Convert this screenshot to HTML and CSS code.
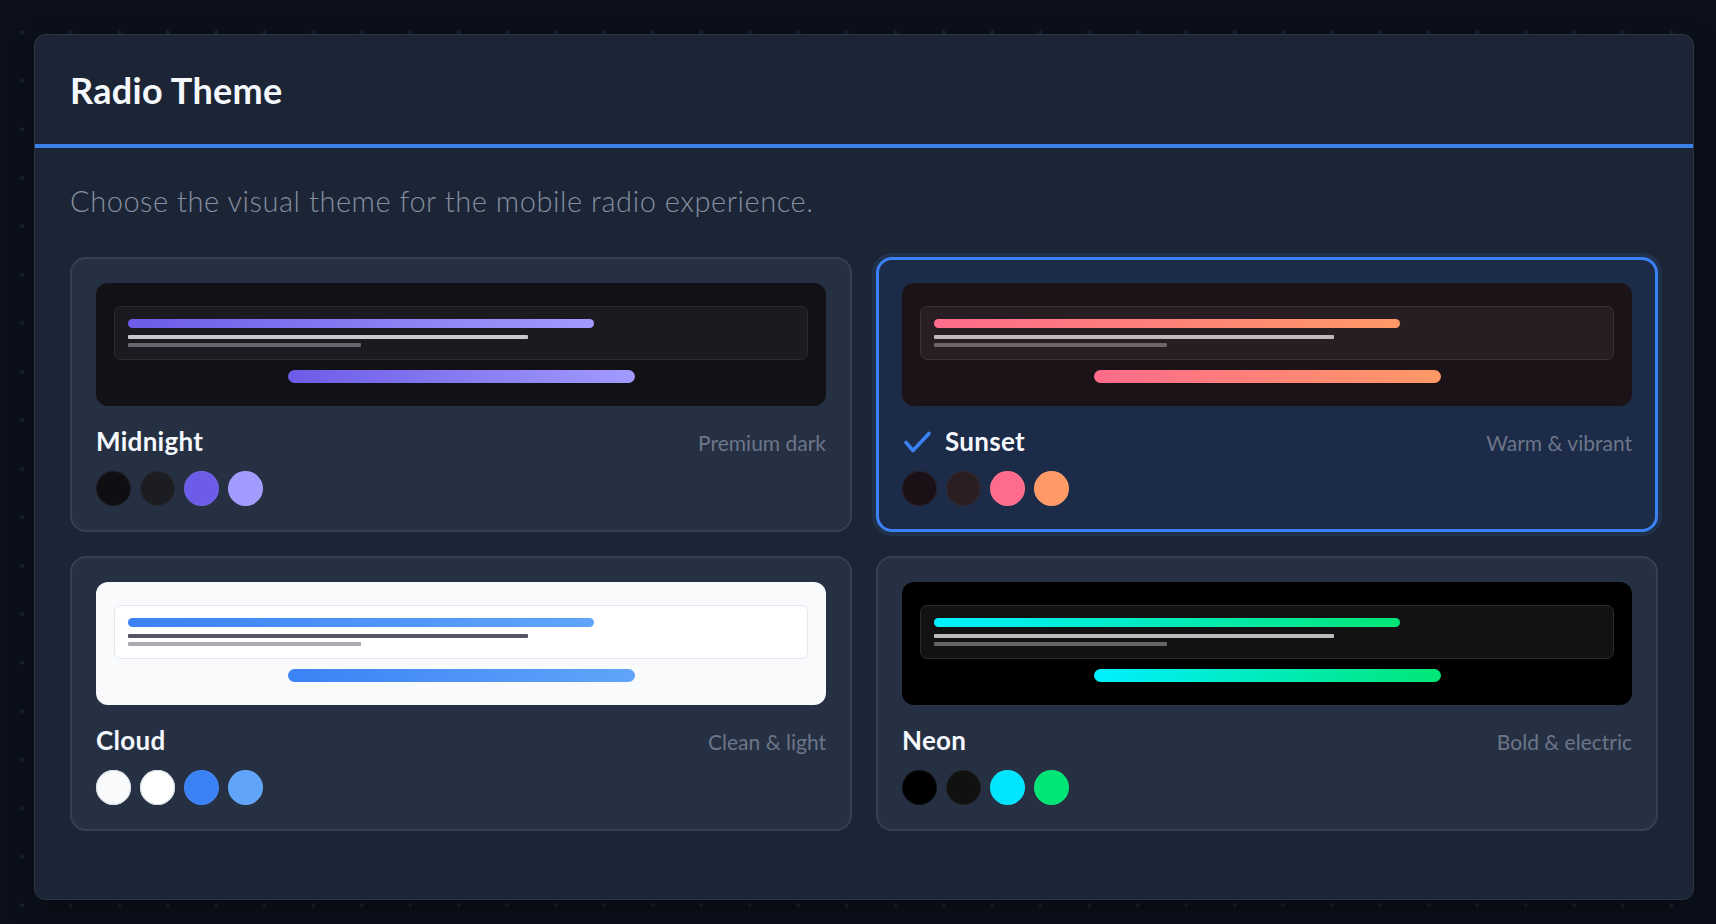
FILE: index.html
```html
<!DOCTYPE html>
<html lang="en">
<head>
<meta charset="utf-8">
<title>Radio Theme</title>
<link rel="stylesheet" href="styles.css">
</head>
<body>
<div class="page">
  <section class="panel">
    <header class="panel-header">
      <h1 class="panel-title">Radio Theme</h1>
    </header>
    <div class="panel-body">
      <p class="intro">Choose the visual theme for the mobile radio experience.</p>
      <div class="theme-grid">

        <div class="theme-card">
          <div class="preview preview-midnight">
            <div class="preview-box">
              <div class="bar"></div>
              <div class="line line-a"></div>
              <div class="line line-b"></div>
            </div>
            <div class="pill"></div>
          </div>
          <div class="theme-meta">
            <div class="theme-name">Midnight</div>
            <div class="theme-desc">Premium dark</div>
          </div>
          <div class="swatches">
            <span class="swatch sw-midnight-1"></span>
            <span class="swatch sw-midnight-2"></span>
            <span class="swatch sw-midnight-3"></span>
            <span class="swatch sw-midnight-4"></span>
          </div>
        </div>

        <div class="theme-card is-selected">
          <div class="preview preview-sunset">
            <div class="preview-box">
              <div class="bar"></div>
              <div class="line line-a"></div>
              <div class="line line-b"></div>
            </div>
            <div class="pill"></div>
          </div>
          <div class="theme-meta">
            <div class="theme-name"><svg class="check" width="30" height="24" viewBox="0 0 30 24"><polyline points="4,12.5 11,20.5 27,3.5" fill="none" stroke="#3b82f6" stroke-width="3.6" stroke-linecap="round" stroke-linejoin="round"/></svg>Sunset</div>
            <div class="theme-desc">Warm &amp; vibrant</div>
          </div>
          <div class="swatches">
            <span class="swatch sw-sunset-1"></span>
            <span class="swatch sw-sunset-2"></span>
            <span class="swatch sw-sunset-3"></span>
            <span class="swatch sw-sunset-4"></span>
          </div>
        </div>

        <div class="theme-card">
          <div class="preview preview-cloud">
            <div class="preview-box">
              <div class="bar"></div>
              <div class="line line-a"></div>
              <div class="line line-b"></div>
            </div>
            <div class="pill"></div>
          </div>
          <div class="theme-meta">
            <div class="theme-name">Cloud</div>
            <div class="theme-desc">Clean &amp; light</div>
          </div>
          <div class="swatches">
            <span class="swatch sw-cloud-1"></span>
            <span class="swatch sw-cloud-2"></span>
            <span class="swatch sw-cloud-3"></span>
            <span class="swatch sw-cloud-4"></span>
          </div>
        </div>

        <div class="theme-card">
          <div class="preview preview-neon">
            <div class="preview-box">
              <div class="bar"></div>
              <div class="line line-a"></div>
              <div class="line line-b"></div>
            </div>
            <div class="pill"></div>
          </div>
          <div class="theme-meta">
            <div class="theme-name">Neon</div>
            <div class="theme-desc">Bold &amp; electric</div>
          </div>
          <div class="swatches">
            <span class="swatch sw-neon-1"></span>
            <span class="swatch sw-neon-2"></span>
            <span class="swatch sw-neon-3"></span>
            <span class="swatch sw-neon-4"></span>
          </div>
        </div>

      </div>
    </div>
  </section>
</div>
</body>
</html>
```

FILE: styles.css
```css
* { box-sizing: border-box; }

html, body {
  margin: 0;
  height: 100%;
}

body {
  font-family: "Lato", "Liberation Sans", sans-serif;
  background-color: #0b101b;
  background-image: radial-gradient(circle, #1b2331 0, #1b2331 1.6px, transparent 2.4px);
  background-size: 48.5px 48.5px;
  background-position: -2px 8px;
  color: #f1f5f9;
}

.page {
  padding: 34px 22px 24px 34px;
}

.panel {
  background: #1c2535;
  border: 1px solid #2b3546;
  border-radius: 11px;
  height: 866px;
  box-shadow: 0 10px 30px rgba(0, 0, 0, 0.35);
  overflow: hidden;
}

.panel-header {
  padding: 34px 35px 32px;
  border-bottom: 4px solid #3b7fe8;
}

.panel-title {
  margin: 0;
  font-size: 36px;
  line-height: 1.2;
  font-weight: 700;
  color: #f5f8fc;
  letter-spacing: 0.3px;
}

.panel-body {
  padding: 36px 35px 36px;
}

.intro {
  margin: 0 0 38px;
  font-size: 29px;
  line-height: 1.2;
  font-weight: 300;
  letter-spacing: 0.55px;
  color: #858fa0;
}

.theme-grid {
  display: grid;
  grid-template-columns: 1fr 1fr;
  gap: 24px;
}

.theme-card {
  background: #253043;
  border: 2px solid #334056;
  border-radius: 16px;
  padding: 24px 24px 24px;
}

.theme-card.is-selected {
  background: #1c2b47;
  border: 3px solid #3b82f6;
  padding: 23px 23px 23px;
  box-shadow: 0 0 0 4px rgba(59, 130, 246, 0.13);
}

.preview {
  height: 123px;
  border-radius: 12px;
  padding: 23px 18px 0;
}

.preview-box {
  height: 54px;
  border-radius: 7px;
  border: 1px solid;
  padding: 12px 13px 0;
}

.bar {
  width: 70%;
  height: 9px;
  border-radius: 5px;
}

.line {
  height: 4px;
  border-radius: 1px;
}

.line-a {
  width: 60%;
  margin-top: 7px;
}

.line-b {
  width: 35%;
  margin-top: 4px;
}

.pill {
  width: 50%;
  height: 13px;
  margin: 10px auto 0;
  border-radius: 7px;
}

/* Midnight */
.preview-midnight { background: #121116; }
.preview-midnight .preview-box { background: #1b1a21; border-color: #2c2b34; }
.preview-midnight .bar,
.preview-midnight .pill { background: linear-gradient(90deg, #6c5ce7, #a29bfe); }
.preview-midnight .line-a { background: #c9c8cf; }
.preview-midnight .line-b { background: #67666e; }

/* Sunset */
.preview-sunset { background: #1c1318; }
.preview-sunset .preview-box { background: #281d22; border-color: #3d3036; }
.preview-sunset .bar,
.preview-sunset .pill { background: linear-gradient(90deg, #ff6b8b, #ff9966); }
.preview-sunset .line-a { background: #c4babd; }
.preview-sunset .line-b { background: #6f6468; }

/* Cloud */
.preview-cloud { background: #f8fafc; }
.preview-cloud .preview-box { background: #ffffff; border-color: #e3e7ed; }
.preview-cloud .bar,
.preview-cloud .pill { background: linear-gradient(90deg, #3b82f6, #60a5fa); }
.preview-cloud .line-a { background: #555566; }
.preview-cloud .line-b { background: #a9abb1; }

/* Neon */
.preview-neon { background: #000000; }
.preview-neon .preview-box { background: #121212; border-color: #2b2b2b; }
.preview-neon .bar,
.preview-neon .pill { background: linear-gradient(90deg, #00f0ff, #00e676); }
.preview-neon .line-a { background: #bbbbbb; }
.preview-neon .line-b { background: #666666; }

.theme-meta {
  display: flex;
  justify-content: space-between;
  align-items: baseline;
  margin-top: 20px;
}

.theme-name {
  font-size: 26px;
  line-height: 31px;
  font-weight: 700;
  letter-spacing: 0.3px;
  color: #f5f8fc;
}

.check {
  display: inline-block;
  vertical-align: -3px;
  margin-right: 13px;
}

.theme-desc {
  font-size: 21px;
  font-weight: 400;
  color: #6c7689;
}

.swatches {
  display: flex;
  gap: 9px;
  margin-top: 14px;
}

.swatch {
  width: 35px;
  height: 35px;
  border-radius: 50%;
  box-shadow: inset 0 0 0 1px rgba(255, 255, 255, 0.06);
}

.sw-midnight-1 { background: #0f0f13; }
.sw-midnight-2 { background: #1c1c23; }
.sw-midnight-3 { background: #6c5ce7; }
.sw-midnight-4 { background: #a29bfe; }

.sw-sunset-1 { background: #1a1016; }
.sw-sunset-2 { background: #2a1e22; }
.sw-sunset-3 { background: #ff6b8b; }
.sw-sunset-4 { background: #ff9966; }

.sw-cloud-1 { background: #f8fafc; box-shadow: inset 0 0 0 1px #d5d9e0; }
.sw-cloud-2 { background: #ffffff; box-shadow: inset 0 0 0 1px #d5d9e0; }
.sw-cloud-3 { background: #3b82f6; }
.sw-cloud-4 { background: #60a5fa; }

.sw-neon-1 { background: #000000; }
.sw-neon-2 { background: #111111; }
.sw-neon-3 { background: #00e5ff; }
.sw-neon-4 { background: #00e676; }
```
